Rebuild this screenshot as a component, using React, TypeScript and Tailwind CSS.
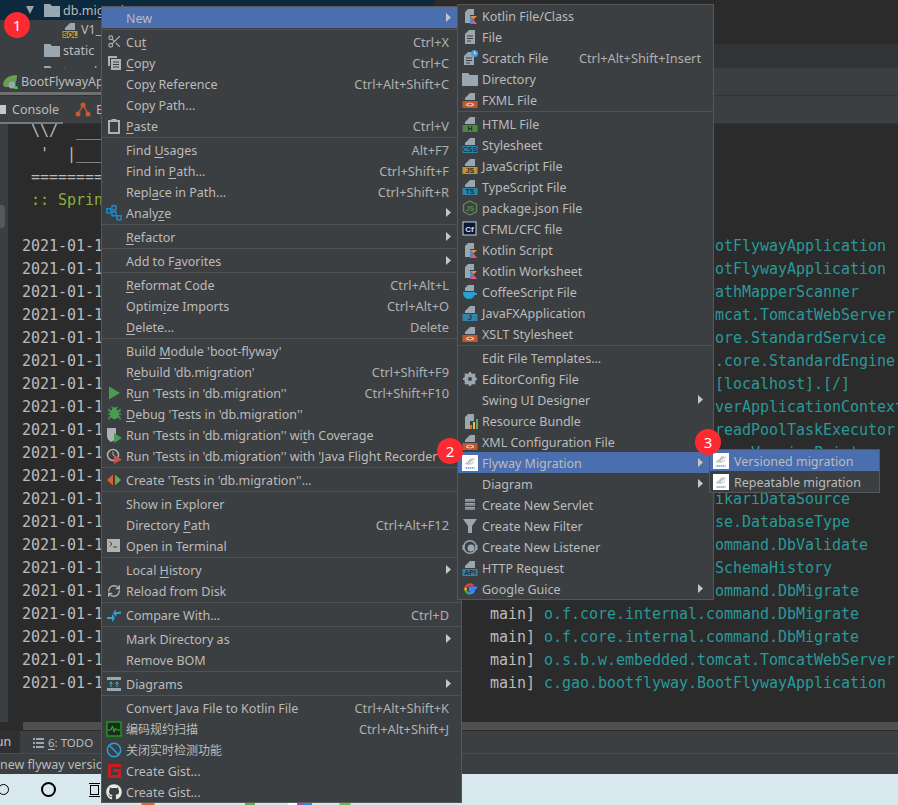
import type { ReactNode } from "react";
import { Ban, Bug, RefreshCw, Scissors } from "lucide-react";
import { FaGithub } from "react-icons/fa";

// gray dog-eared file with a coloured label underneath
const Doc = ({ tag, color, fg = "#2b2b2b" }: { tag: string; color: string; fg?: string }) => (
  <svg width="16" height="16" viewBox="0 0 16 16">
    <path d="M8 1h5v7H3V6z" fill="#9aa7b0" />
    <rect x="0.5" y="9" width="15" height="7" fill={color} />
    <text x="8" y="15" textAnchor="middle" fontSize="7" fontFamily="Liberation Sans" fontWeight="700" fill={fg}>
      {tag}
    </text>
  </svg>
);

const PlainFile = () => (
  <svg width="16" height="16" viewBox="0 0 16 16">
    <path d="M7 1h6v14H3V5z" fill="#9aa7b0" />
    <path d="M5 7h6M5 9.500h6M5 12h4" stroke="#3c3f41" />
  </svg>
);

const ScratchFile = () => (
  <svg width="16" height="16" viewBox="0 0 16 16">
    <path d="M6 2h6v13H2V6z" fill="#9aa7b0" />
    <path d="M4 8h6M4 10.500h6M4 13h4" stroke="#3c3f41" />
    <circle cx="12.500" cy="3.500" r="3.500" fill="#40a0e0" />
    <path d="M12.500 1.500v2h1.500" fill="none" stroke="#ffffff" strokeWidth="0.800" />
  </svg>
);

const KotlinFile = () => (
  <svg width="16" height="16" viewBox="0 0 16 16">
    <path d="M6 1h6v6H8v8H3V4z" fill="#9aa7b0" />
    <path d="M8 8h7l-3.500 3.500L8 8z" fill="#f88a2a" />
    <path d="M8 8v8l3.500-4.500z" fill="#3f8fdc" />
    <path d="M8 16l3.500-4.500L15 16z" fill="#e4577b" />
  </svg>
);

const Folder = ({ className = "" }: { className?: string }) => (
  <svg className={className} width="16" height="14" viewBox="0 0 16 14">
    <path d="M0 1h6l2 2h8v11H0z" fill="#9aa7b0" />
  </svg>
);

const Copy = () => (
  <svg width="16" height="16" viewBox="0 0 16 16">
    <path d="M2 1h9v2H4v8H2z" fill="#afb1b3" />
    <path d="M5 4h10v11H5z" fill="#afb1b3" />
    <path d="M7 7h6M7 9.500h6M7 12h6" stroke="#3c3f41" />
  </svg>
);

const Paste = () => (
  <svg width="16" height="16" viewBox="0 0 16 16">
    <path d="M3 3h10v12H3z" fill="none" stroke="#afb1b3" strokeWidth="2" />
    <rect x="5.500" y="1" width="5" height="3" fill="#afb1b3" />
  </svg>
);

const Analyze = () => (
  <svg width="16" height="16" viewBox="0 0 16 16">
    <g fill="none" stroke="#1b8ac7" strokeWidth="1.500">
      <rect x="0.800" y="3.800" width="4" height="4" />
      <rect x="6" y="0.800" width="4" height="4" />
      <rect x="6" y="6.800" width="4" height="4" />
      <rect x="11" y="10.800" width="4" height="4" />
    </g>
  </svg>
);

const Play = ({ color = "#499c54" }: { color?: string }) => (
  <svg width="16" height="16" viewBox="0 0 16 16">
    <path d="M3 1.500L14 8 3 14.500z" fill={color} />
  </svg>
);

const Coverage = () => (
  <svg width="16" height="16" viewBox="0 0 16 16">
    <path d="M1 1h9v8c0 3-2 5-5 6-2-1-4-3-4-6z" fill="#afb1b3" />
    <path d="M8 6l8 5-8 5z" fill="#499c54" />
  </svg>
);

const Flight = () => (
  <svg width="16" height="16" viewBox="0 0 16 16">
    <circle cx="7" cy="7" r="5.500" fill="none" stroke="#afb1b3" strokeWidth="1.500" />
    <path d="M7 3.500V7l2.500 2" fill="none" stroke="#afb1b3" />
    <path d="M8 7l8 4.500L8 16z" fill="#c75450" />
  </svg>
);

const CreateTest = () => (
  <svg width="16" height="16" viewBox="0 0 16 16">
    <path d="M7 2.500v11L1 8z" fill="#e05d2c" />
    <path d="M9 2.500v11L15 8z" fill="#6aa84f" />
  </svg>
);

const TerminalIcon = () => (
  <svg width="16" height="16" viewBox="0 0 16 16">
    <rect x="1" y="1" width="13" height="13" fill="#afb1b3" />
    <path d="M3.500 3.500L6 6 3.500 8.500M7 9h4" fill="none" stroke="#3c3f41" />
  </svg>
);

const Compare = () => (
  <svg width="16" height="16" viewBox="0 0 16 16">
    <path d="M1 10h5V7l3 4-3 4v-3H1z" fill="#389fd6" />
    <path d="M15 5h-5V2L7 6l3 4V7h5z" fill="#389fd6" transform="rotate(-8 11 6)" />
  </svg>
);

const Diagrams = () => (
  <svg width="16" height="16" viewBox="0 0 16 16">
    <rect x="1" y="1" width="14" height="3" fill="#9aa7b0" />
    <rect x="1" y="12" width="14" height="3" fill="#9aa7b0" />
    <path d="M5 11V6M3.500 7.500L5 6l1.500 1.500M11 11V6M9.500 7.500L11 6l1.500 1.500" fill="none" stroke="#40b6e0" />
  </svg>
);

const Scan = () => (
  <svg width="16" height="16" viewBox="0 0 16 16">
    <rect x="1" y="1" width="14" height="14" fill="#1f2a1f" stroke="#18a818" strokeWidth="1.300" />
    <path d="M2 9h3l1.500-4L8 11l1.500-4 1 2h3.500" fill="none" stroke="#2cbf2c" />
  </svg>
);

const Gitee = () => (
  <svg width="16" height="16" viewBox="0 0 16 16">
    <path d="M2 1h13v3H5v8h7V9H7V6h8v9H2z" fill="#c71d23" />
  </svg>
);

const NodeFile = () => (
  <svg width="16" height="16" viewBox="0 0 16 16">
    <path d="M8 1l6.500 3.500v7L8 15l-6.500-3.500v-7z" fill="none" stroke="#5c8a57" strokeWidth="1.300" />
    <text x="8" y="11" textAnchor="middle" fontSize="7" fontFamily="Liberation Sans" fontWeight="700" fill="#5c8a57">
      JS
    </text>
  </svg>
);

const Cfml = () => (
  <svg width="16" height="16" viewBox="0 0 16 16">
    <rect x="1" y="1" width="13" height="13" fill="#0b1536" stroke="#c8d0e0" />
    <text x="7.500" y="11" textAnchor="middle" fontSize="8" fontFamily="Liberation Sans" fontWeight="700" fill="#cfe3ff">
      Cf
    </text>
  </svg>
);

const Coffee = () => (
  <svg width="16" height="16" viewBox="0 0 16 16">
    <path d="M6 1h6v6H3V4z" fill="#9aa7b0" />
    <path d="M1 8h12c0 4-2 7-6 7S1 12 1 8z" fill="#28a0d0" />
    <path d="M12 9h3v2h-3z" fill="#28a0d0" />
  </svg>
);

const Gear = () => (
  <svg width="16" height="16" viewBox="0 0 16 16">
    <circle cx="8" cy="8" r="4.500" fill="none" stroke="#9aa7b0" strokeWidth="3" />
    <path d="M8 1v14M1 8h14M3 3l10 10M13 3L3 13" stroke="#9aa7b0" strokeWidth="2.200" />
    <circle cx="8" cy="8" r="2" fill="#3c3f41" />
  </svg>
);

const Bundle = () => (
  <svg width="16" height="16" viewBox="0 0 16 16">
    <path d="M6 1h6v7H8v8H3V4z" fill="#9aa7b0" />
    <rect x="8" y="12" width="2" height="4" fill="#f26522" />
    <rect x="11" y="9" width="2" height="7" fill="#f2c037" />
    <rect x="14" y="6" width="2" height="10" fill="#59a869" />
  </svg>
);

// white tile with a pencil-sketch bird and the blue word mark underneath
const Flyway = () => (
  <svg width="16" height="16" viewBox="0 0 16 16">
    <rect width="16" height="16" fill="#ffffff" />
    <path d="M3 9l4-3 2-3M5 9l3-3 3-3M7 9l2-3 4-2M4 9h5l3-2" fill="none" stroke="#9c9c9c" strokeWidth="0.700" />
    <path d="M3.500 13h9" stroke="#6f9bd1" strokeWidth="1.600" strokeDasharray="1.500 0.500" />
  </svg>
);

const ServletIcon = () => (
  <svg width="16" height="16" viewBox="0 0 16 16">
    <path d="M3 2h10v3H3zM3 6h10v3H3zM3 10h10v3H3z" fill="#9aa7b0" />
    <path d="M3 4h10M3 8h10M3 12h10" stroke="#3c3f41" strokeWidth="0.600" />
  </svg>
);

const Funnel = () => (
  <svg width="16" height="16" viewBox="0 0 16 16">
    <path d="M1 1h14L10 8v7H6V8z" fill="#9aa7b0" />
  </svg>
);

const Listener = () => (
  <svg width="16" height="16" viewBox="0 0 16 16">
    <circle cx="8" cy="8" r="6.300" fill="none" stroke="#9aa7b0" strokeWidth="1.500" />
    <circle cx="9" cy="9" r="3.500" fill="#9aa7b0" />
    <path d="M0.500 6h2v5h-2zM13.500 6h2v5h-2z" fill="#9aa7b0" />
  </svg>
);

const GoogleG = () => (
  <svg width="16" height="16" viewBox="0 0 16 16">
    <path d="M14.800 6.700H8v2.700h3.900c-.5 1.700-2 2.800-3.900 2.800" fill="none" stroke="#4285f4" strokeWidth="2.400" />
    <path d="M8 12.500a4.500 4.500 0 0 1-4.200-3" fill="none" stroke="#34a853" strokeWidth="2.400" />
    <path d="M3.800 9.500a4.500 4.500 0 0 1 0-3" fill="none" stroke="#fbbc05" strokeWidth="2.400" />
    <path d="M3.800 6.500A4.500 4.500 0 0 1 11.200 4.800" fill="none" stroke="#ea4335" strokeWidth="2.400" />
  </svg>
);

const Arrow = () => (
  <svg width="5" height="9" viewBox="0 0 5 9">
    <path d="M0 0l5 4.500L0 9z" fill="#c4c6c8" />
  </svg>
);

type Item = {
  label: string;
  ul?: number; // index of the mnemonic letter
  keys?: string;
  arrow?: boolean;
  active?: boolean;
  cjk?: boolean;
  icon?: ReactNode;
};

const mainMenu: Item[][] = [
  [{ label: "New", arrow: true, active: true }],
  [
    { label: "Cut", ul: 2, keys: "Ctrl+X", icon: <Scissors size={15} color="#afb1b3" strokeWidth={1.800} /> },
    { label: "Copy", ul: 0, keys: "Ctrl+C", icon: <Copy /> },
    { label: "Copy Reference", ul: 3, keys: "Ctrl+Alt+Shift+C" },
    { label: "Copy Path..." },
    { label: "Paste", ul: 0, keys: "Ctrl+V", icon: <Paste /> },
  ],
  [
    { label: "Find Usages", ul: 5, keys: "Alt+F7" },
    { label: "Find in Path...", ul: 8, keys: "Ctrl+Shift+F" },
    { label: "Replace in Path...", ul: 4, keys: "Ctrl+Shift+R" },
    { label: "Analyze", ul: 5, arrow: true, icon: <Analyze /> },
  ],
  [{ label: "Refactor", ul: 0, arrow: true }],
  [{ label: "Add to Favorites", ul: 8, arrow: true }],
  [
    { label: "Reformat Code", ul: 0, keys: "Ctrl+Alt+L" },
    { label: "Optimize Imports", ul: 5, keys: "Ctrl+Alt+O" },
    { label: "Delete...", ul: 0, keys: "Delete" },
  ],
  [
    { label: "Build Module 'boot-flyway'", ul: 6 },
    { label: "Rebuild 'db.migration'", ul: 1, keys: "Ctrl+Shift+F9" },
    { label: "Run 'Tests in 'db.migration''", ul: 1, keys: "Ctrl+Shift+F10", icon: <Play /> },
    { label: "Debug 'Tests in 'db.migration''", ul: 0, icon: <Bug size={15} color="#499c54" fill="#499c54" /> },
    { label: "Run 'Tests in 'db.migration'' with Coverage", ul: 32, icon: <Coverage /> },
    { label: "Run 'Tests in 'db.migration'' with 'Java Flight Recorder'", icon: <Flight /> },
  ],
  [{ label: "Create 'Tests in 'db.migration''...", icon: <CreateTest /> }],
  [
    { label: "Show in Explorer" },
    { label: "Directory Path", ul: 10, keys: "Ctrl+Alt+F12" },
    { label: "Open in Terminal", icon: <TerminalIcon /> },
  ],
  [
    { label: "Local History", ul: 6, arrow: true },
    { label: "Reload from Disk", icon: <RefreshCw size={14} color="#afb1b3" strokeWidth={2.400} /> },
  ],
  [{ label: "Compare With...", keys: "Ctrl+D", icon: <Compare /> }],
  [{ label: "Mark Directory as", arrow: true }, { label: "Remove BOM" }],
  [{ label: "Diagrams", arrow: true, icon: <Diagrams /> }],
  [
    { label: "Convert Java File to Kotlin File", keys: "Ctrl+Alt+Shift+K" },
    { label: "编码规约扫描", cjk: true, keys: "Ctrl+Alt+Shift+J", icon: <Scan /> },
    { label: "关闭实时检测功能", cjk: true, icon: <Ban size={16} color="#2a9fe0" strokeWidth={2.200} /> },
    { label: "Create Gist...", icon: <Gitee /> },
    { label: "Create Gist...", icon: <FaGithub size={16} color="#e8e8e8" /> },
  ],
];

const newMenu: Item[][] = [
  [
    { label: "Kotlin File/Class", icon: <KotlinFile /> },
    { label: "File", icon: <PlainFile /> },
    { label: "Scratch File", keys: "Ctrl+Alt+Shift+Insert", icon: <ScratchFile /> },
    { label: "Directory", icon: <Folder /> },
    { label: "FXML File", icon: <Doc tag="<>" color="#c0582a" fg="#e8e8e8" /> },
  ],
  [
    { label: "HTML File", icon: <Doc tag="H" color="#4d8a3a" /> },
    { label: "Stylesheet", icon: <Doc tag="CSS" color="#2f84a8" /> },
    { label: "JavaScript File", icon: <Doc tag="JS" color="#c4932f" /> },
    { label: "TypeScript File", icon: <Doc tag="TS" color="#2f84a8" /> },
    { label: "package.json File", icon: <NodeFile /> },
    { label: "CFML/CFC file", icon: <Cfml /> },
    { label: "Kotlin Script", icon: <KotlinFile /> },
    { label: "Kotlin Worksheet", icon: <KotlinFile /> },
    { label: "CoffeeScript File", icon: <Coffee /> },
    { label: "JavaFXApplication", icon: <Doc tag="J" color="#2f84a8" /> },
    { label: "XSLT Stylesheet", icon: <Doc tag="<>" color="#c0582a" fg="#e8e8e8" /> },
  ],
  [
    { label: "Edit File Templates..." },
    { label: "EditorConfig File", icon: <Gear /> },
    { label: "Swing UI Designer", arrow: true },
    { label: "Resource Bundle", icon: <Bundle /> },
    { label: "XML Configuration File", icon: <Doc tag="<>" color="#c0582a" fg="#e8e8e8" /> },
    { label: "Flyway Migration", arrow: true, active: true, icon: <Flyway /> },
    { label: "Diagram", arrow: true },
    { label: "Create New Servlet", icon: <ServletIcon /> },
    { label: "Create New Filter", icon: <Funnel /> },
    { label: "Create New Listener", icon: <Listener /> },
    { label: "HTTP Request", icon: <Doc tag="API" color="#2f84a8" /> },
    { label: "Google Guice", arrow: true, icon: <GoogleG /> },
  ],
];

const MenuRow = ({ item }: { item: Item }) => {
  const { label, ul, keys, arrow, active, cjk, icon } = item;
  return (
    <div className={`flex items-center h-[21px] pl-1 pr-[10px] ${active ? "bg-[#4b6eaf]" : ""}`}>
      <span className="w-[16px] h-[16px] flex items-center justify-center shrink-0">{icon}</span>
      <span className={`ml-1 pt-px flex-1 whitespace-nowrap ${cjk ? "text-[12px]" : ""}`}>
        {ul === undefined ? (
          label
        ) : (
          <>
            {label.slice(0, ul)}
            <span className="underline underline-offset-2">{label[ul]}</span>
            {label.slice(ul + 1)}
          </>
        )}
      </span>
      {keys && <span className="mr-[2px] pt-px whitespace-nowrap text-[12.8px] text-[#b0b0b0]">{keys}</span>}
      {arrow && <Arrow />}
    </div>
  );
};

const Menu = ({ groups, className }: { groups: Item[][]; className: string }) => (
  <div className={`absolute flex flex-col bg-[#3c3f41] border border-[#555759] ${className}`}>
    {groups.map((group, i) => (
      <div key={i} className={i > 0 ? "mt-[1px] pt-[1px] border-t border-[#515151]" : ""}>
        {group.map((item, j) => (
          <MenuRow key={j} item={item} />
        ))}
      </div>
    ))}
  </div>
);

const Badge = ({ n, className }: { n: number; className: string }) => (
  <div
    className={`absolute w-[26px] h-[26px] rounded-full bg-[#fd2b31] text-white text-[15px] flex items-center justify-center ${className}`}
  >
    {n}
  </div>
);

const head = "2021-01-16 15:25:37.123  INFO 12345 --- [           main] ";

const loggers = [
  "c.gao.bootflyway.BootFlywayApplication",
  "c.gao.bootflyway.BootFlywayApplication",
  "o.m.s.mapper.ClassPathMapperScanner",
  "o.s.b.w.embedded.tomcat.TomcatWebServer",
  "o.apache.catalina.core.StandardService",
  "org.apache.catalina.core.StandardEngine",
  "o.a.c.c.C.[Tomcat].[localhost].[/]",
  "w.s.c.ServletWebServerApplicationContext",
  "o.s.s.concurrent.ThreadPoolTaskExecutor",
  "o.f.c.internal.license.VersionPrinter",
  "com.zaxxer.hikari.HikariDataSource",
  "com.zaxxer.hikari.HikariDataSource",
  "o.f.core.int.database.DatabaseType",
  "o.f.core.internal.command.DbValidate",
  "o.f.c.i.s.JdbcTableSchemaHistory",
  "o.f.core.internal.command.DbMigrate",
  "o.f.core.internal.command.DbMigrate",
  "o.f.core.internal.command.DbMigrate",
  "o.s.b.w.embedded.tomcat.TomcatWebServer",
  "c.gao.bootflyway.BootFlywayApplication",
];

const App = () => {
  return (
    <div className="relative w-[898px] h-[805px] overflow-hidden flex flex-col bg-[#2b2b2b] text-[#bbbbbb] font-['Noto_Sans','Noto_Sans_CJK_SC',sans-serif] text-[12.5px] leading-[21px]">
      {/* project tree + editor edge */}
      <div className="flex h-[68px] shrink-0">
        <div className="w-[434px] bg-[#3c3f41] overflow-hidden">
          <div className="flex items-center h-[20px] bg-[#0d293e]">
            <span className="ml-[26px] w-0 h-0 border-x-[4px] border-x-transparent border-t-[8px] border-t-[#a0a3a5]" />
            <Folder className="ml-[10px]" />
            <span className="ml-[3px]">db.migration</span>
          </div>
          <div className="flex items-center h-[19px] pl-[62px]">
            <Doc tag="SQL" color="#c4932f" />
            <span className="ml-[3px]">V1__init.sql</span>
          </div>
          <div className="flex items-center h-[22px] pl-[44px]">
            <Folder />
            <span className="ml-[3px]">static</span>
          </div>
          <div className="flex items-center h-[21px] pl-[44px]">
            <Folder />
            <span className="ml-[3px]">templates</span>
          </div>
        </div>
        <div className="flex-1 flex flex-col">
          <div className="h-[44px]" />
          <div className="h-[24px] bg-[#313335] border-t border-[#323232]" />
        </div>
      </div>

      {/* run tool window tabs */}
      <div className="h-[28px] shrink-0 bg-[#3c3f41] border-b border-[#323232]">
        <div className="flex items-center h-[24px] pl-[2px] pt-[2px]">
          <svg width="16" height="16" viewBox="0 0 16 16">
            <path d="M1 12C1 6 7 2 15 2c0 8-3 12-8 12H3z" fill="#6a9f4f" />
            <circle cx="10" cy="12" r="3.500" fill="#9aa7b0" />
            <circle cx="14" cy="15" r="2" fill="#35d03d" />
          </svg>
          <span className="ml-[3px]">BootFlywayApplication</span>
        </div>
        <div className="h-[3px] w-[200px] bg-[#6e7072]" />
      </div>
      <div className="h-[28px] shrink-0 bg-[#3c3f41] border-b border-[#323232] flex">
        <div className="w-[63px] h-[28px] border-b-2 border-[#747a80] flex items-center">
          <span className="w-[6px] h-[9px] bg-[#c8c8c8]" />
          <span className="ml-[6px]">Console</span>
        </div>
        <div className="flex items-center ml-[12px]">
          <svg width="16" height="16" viewBox="0 0 16 16">
            <circle cx="8" cy="3" r="2.500" fill="#c75a2c" />
            <circle cx="3" cy="12" r="2.500" fill="#c75a2c" />
            <circle cx="13" cy="12" r="2.500" fill="#c75a2c" />
            <path d="M8 3l-5 9M8 3l5 9" stroke="#c75a2c" strokeWidth="1.500" />
          </svg>
          <span className="ml-[5px]">Endpoints</span>
        </div>
      </div>

      {/* console */}
      <div className="flex flex-1 min-h-0">
        <div className="w-[8px] bg-[#3c3f41] flex flex-col pt-[81px]">
          <div className="h-[23px] w-[5px] rounded-r bg-[#55595b]" />
        </div>
        <div className="flex-1 min-w-0 overflow-hidden pl-[14px] -mt-[4px] whitespace-pre leading-[23px] text-[15px] font-['DejaVu_Sans_Mono',monospace] tracking-[-0.03px]">
          <div>{" \\\\/  ___)| |_)| | | | | || (_| |  ) ) ) )"}</div>
          <div>{"  '  |____| .__|_| |_|_| |_\\__, | / / / /"}</div>
          <div>{" =========|_|==============|___/=/_/_/_/"}</div>
          <div className="text-[#8fae3c]">{" :: Spring Boot ::        (v2.4.2)"}</div>
          <div className="h-[23px]" />
          {loggers.map((logger, i) => (
            <div key={i}>
              {head}
              <span className="text-[#299999]">{logger}</span>
            </div>
          ))}
        </div>
      </div>
      <div className="h-[9px] shrink-0 pl-[23px] bg-[#2b2b2b]">
        <div className="h-[8px] bg-[#4f4f4f]" />
      </div>

      {/* bottom bars */}
      <div className="h-[23px] shrink-0 bg-[#3c3f41] flex items-center border-b border-[#4a4c4e]">
        <div className="w-[20px] h-full bg-[#2e3032] overflow-hidden whitespace-nowrap text-[#c8c8c8]">
          <span className="block -ml-[12px]">Run</span>
        </div>
        <svg className="ml-[13px]" width="11" height="11" viewBox="0 0 11 11">
          <path d="M0 1h2v2H0zM3 1h8v2H3zM0 5h2v2H0zM3 5h8v2H3zM0 9h2v2H0zM3 9h8v2H3z" fill="#9aa7b0" />
        </svg>
        <span className="ml-[4px] text-[11.5px]">
          <span className="underline underline-offset-2">6</span>: TODO
        </span>
      </div>
      <div className="h-[20px] shrink-0 bg-[#3c3f41] whitespace-nowrap overflow-hidden">new flyway version</div>

      {/* windows taskbar */}
      <div className="relative h-[31px] shrink-0 bg-[#d9e8ee] flex items-center">
        <span className="-ml-[2px] w-[11px] h-[11px] rounded-full border border-black" />
        <span className="ml-[32px] w-[15px] h-[15px] rounded-full border-[2px] border-black" />
        <svg className="ml-[33px]" width="11" height="14" viewBox="0 0 11 14">
          <path d="M0 .5h11M0 13.500h11" stroke="#000000" />
          <rect x="1.500" y="2.500" width="8" height="9" fill="none" stroke="#000000" />
        </svg>
        {/* tops of the pinned apps, only just showing under the menu */}
        <div className="absolute left-[141px] bottom-0 flex items-end h-[2px]">
          <span className="w-[14px] h-full rounded-t bg-[#e8622a]" />
          <span className="ml-[90px] w-[10px] h-full bg-[#5fb04f]" />
          <span className="ml-[33px] w-[9px] h-full bg-white" />
          <span className="w-[7px] h-full bg-[#a04fc0]" />
          <span className="w-[8px] h-full bg-[#2a8fe0]" />
          <span className="ml-[27px] w-[12px] h-full rounded-t bg-[#5fc04f]" />
        </div>
      </div>

      <Menu groups={mainMenu} className="left-[101px] top-[6px] w-[361px]" />
      <Menu groups={newMenu} className="left-[457px] top-[4px] w-[257px]" />
      <div className="absolute left-[709px] top-[449px] w-[171px] flex flex-col bg-[#3c3f41] border border-[#555759]">
        <div className="flex items-center h-[21px] pl-[3px] bg-[#4b6eaf]">
          <Flyway />
          <span className="ml-[5px] pt-px">Versioned migration</span>
        </div>
        <div className="flex items-center h-[21px] pl-[3px]">
          <Flyway />
          <span className="ml-[5px] pt-px">Repeatable migration</span>
        </div>
      </div>

      <Badge n={1} className="left-[4px] top-[12px]" />
      <Badge n={2} className="left-[437px] top-[438px]" />
      <Badge n={3} className="left-[695px] top-[429px]" />
    </div>
  );
};

export default App;
